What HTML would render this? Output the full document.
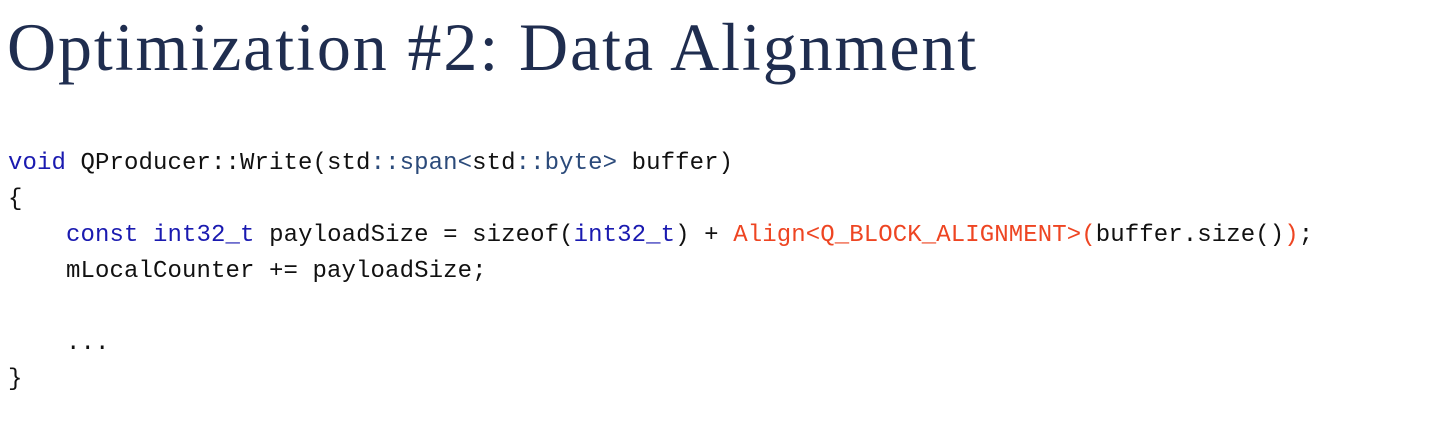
<!DOCTYPE html>
<html><head><meta charset="utf-8"><style>
html,body{margin:0;padding:0;background:#fff;width:1440px;height:435px;overflow:hidden}
h1{position:absolute;left:7px;top:5px;margin:0;font-family:"Liberation Serif",serif;font-weight:normal;font-size:68px;line-height:84px;color:#1f2d4f;letter-spacing:1.9px;white-space:nowrap}
pre{position:absolute;left:8px;top:146px;margin:0;font-family:"Liberation Mono",monospace;font-size:24px;line-height:36px;color:#111;letter-spacing:0.1px}
.k{color:#1a1ab0}.t{color:#2b4a7a}.o{color:#ee4522}
</style></head><body>
<h1>Optimization #2: Data Alignment</h1>
<pre><span class="k">void</span> QProducer::Write(std<span class="t">::span&lt;</span>std<span class="t">::byte&gt;</span> buffer)
{
    <span class="k">const</span> <span class="k">int32_t</span> payloadSize = sizeof(<span class="k">int32_t</span>) + <span class="o">Align&lt;Q_BLOCK_ALIGNMENT&gt;(</span>buffer.size()<span class="o">)</span>;
    mLocalCounter += payloadSize;

    ...
}</pre>
</body></html>
